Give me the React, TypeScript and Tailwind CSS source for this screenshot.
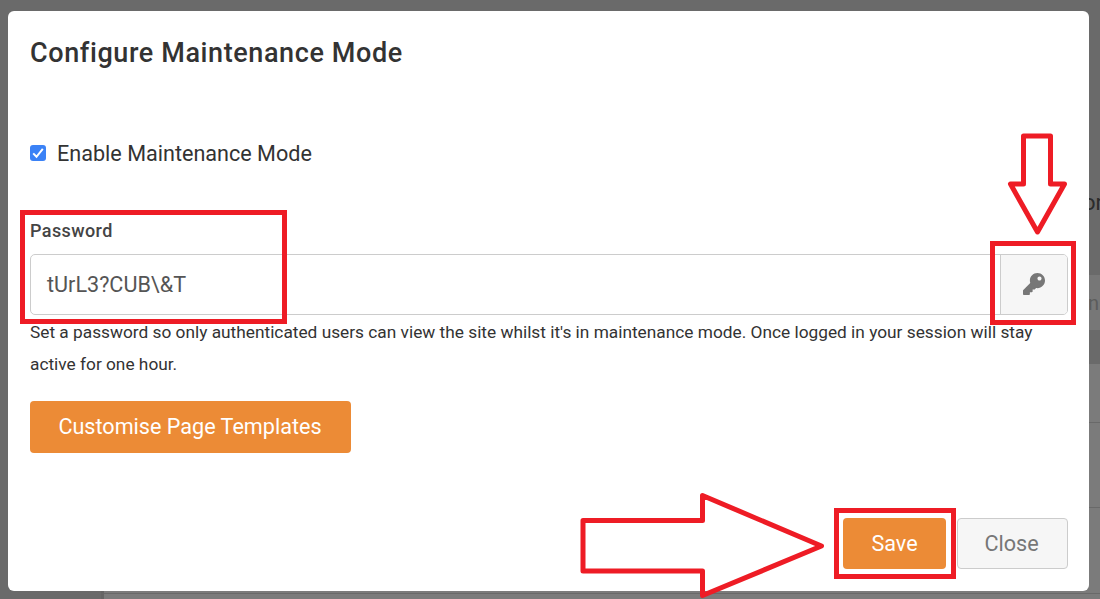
import { FaKey } from 'react-icons/fa'

// Dimmed page that shows around the edges of the modal
function PageBackdrop() {
  return (
    <div className="flex flex-col w-full h-full bg-[#6a6a6a]">
      <div className="h-[275px] flex justify-end">
        <span className="mt-[188px] w-[17px] text-[22px] leading-[30px] text-[#2b2b2b] whitespace-nowrap">or</span>
      </div>
      <div className="h-[55px] ml-[101px] flex justify-end items-center bg-[#777777]">
        <span className="w-[12px] text-[20px] text-[#5c5c5c]">n</span>
      </div>
      <div className="h-[34px]" />
      <div className="flex-1 flex">
        <div className="w-[101px]" />
        <div className="flex-1 flex flex-col bg-[#7b7b7b] border-l-3 border-[#656565]">
          <div className="h-[59px] border-b border-[#696969]" />
          <div className="h-[85px] border-b border-[#696969]" />
          <div className="h-[86px] border-b border-[#696969]" />
        </div>
      </div>
    </div>
  )
}

function Checkbox() {
  return (
    <span className="w-4 h-4 mb-[2px] rounded-[3px] bg-[#3b82f6] flex items-center justify-center">
      <svg viewBox="0 0 16 16" className="w-4 h-4" fill="none" stroke="#fff" strokeWidth="2">
        <path d="M3.2 8.4 6.5 11.8 12.8 3.9" />
      </svg>
    </span>
  )
}

function Highlights() {
  return (
    <>
      <div className="absolute left-[20px] top-[210px] w-[267px] h-[114px] border-5 border-[#ee1c25]" />
      <div className="absolute left-[990px] top-[241px] w-[86px] h-[84px] border-5 border-[#ee1c25]" />
      <div className="absolute left-[834px] top-[508px] w-[122px] h-[71px] border-5 border-[#ee1c25]" />
      <svg
        className="absolute inset-0"
        width="1100"
        height="599"
        fill="none"
        stroke="#ee1c25"
        strokeWidth="5"
        strokeLinejoin="round"
      >
        <path d="M1023.5 136H1050.5V184H1064.5L1037.5 232L1010.5 184H1023.5Z" />
        <path d="M583 520.5H702.5V495.5L821.5 546L702.5 595.5V571H583Z" />
      </svg>
    </>
  )
}

export default function App() {
  return (
    <div className="relative w-[1100px] h-[599px] overflow-hidden font-['Roboto',sans-serif]">
      <PageBackdrop />

      <div className="absolute left-[8px] top-[11px] w-[1081px] h-[580px] rounded-[6px] bg-white px-[22px] flex flex-col items-start text-[#333]">
        <h1 className="mt-[24px] text-[27px] leading-[36px] font-medium tracking-[0.6px] whitespace-nowrap">
          Configure Maintenance Mode
        </h1>

        <label className="mt-[68px] h-[30px] flex items-center gap-[11px] text-[21.6px] leading-[30px] whitespace-nowrap">
          <Checkbox />
          Enable Maintenance Mode
        </label>

        <div className="mt-[50px] text-[18px] leading-[24px] font-medium text-[#444] tracking-[0.4px]">Password</div>

        <div className="mt-[11px] w-[1038px] h-[61px] flex rounded-[5px] border border-[#ccc] overflow-hidden">
          <div className="flex-1 flex items-center pl-[16px] pt-[2px] text-[21.6px] text-[#555]">{'tUrL3?CUB\\&T'}</div>
          <button className="w-[67px] pb-[2px] flex items-center justify-center border-l border-[#ccc] bg-[#f6f6f6] text-[#777]">
            <FaKey size={22} />
          </button>
        </div>

        <p className="mt-px text-[17.3px] leading-[32px] whitespace-nowrap">
          Set a password so only authenticated users can view the site whilst it's in maintenance mode. Once logged in your session will stay
          <br />
          active for one hour.
        </p>

        <button className="mt-[21px] w-[321px] h-[52px] rounded-[4px] bg-[#ec8b36] pr-px text-white text-[21.6px]">
          Customise Page Templates
        </button>

        <div className="mt-[65px] w-[1038px] flex justify-end gap-[11px] text-[21.6px]">
          <button className="w-[103px] h-[51px] pt-px rounded-[4px] bg-[#ec8b36] text-white">Save</button>
          <button className="w-[111px] h-[51px] pt-px pr-[2px] rounded-[4px] border border-[#ccc] bg-[#f6f6f6] text-[#777]">Close</button>
        </div>
      </div>

      <Highlights />
    </div>
  )
}
